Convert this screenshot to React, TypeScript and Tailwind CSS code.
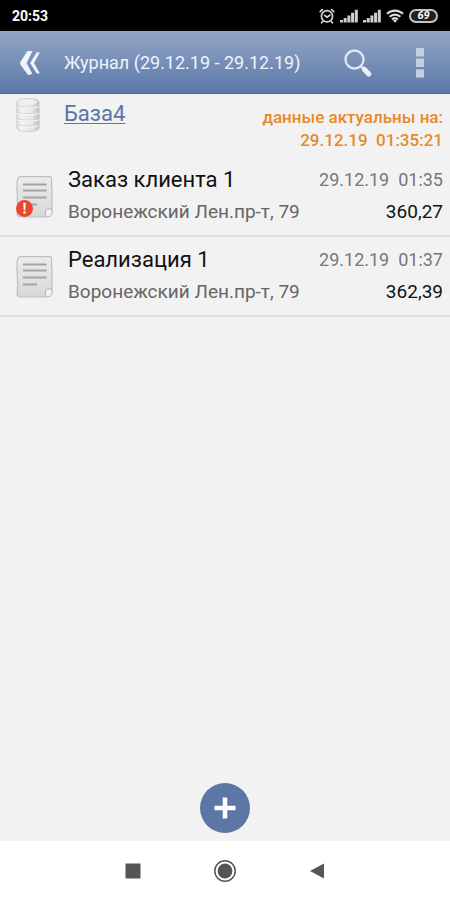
interface JournalEntry {
    id: number;
    title: string;
    client: string;
    date: string;
    total: string;
    hasError?: boolean;
}

const entries: JournalEntry[] = [
    { id: 1, title: "Заказ клиента 1", client: "Воронежский Лен.пр-т, 79", date: "29.12.19  01:35", total: "360,27", hasError: true },
    { id: 2, title: "Реализация 1", client: "Воронежский Лен.пр-т, 79", date: "29.12.19  01:37", total: "362,39" },
];

function AlarmIcon() {
    return (
        <svg viewBox="0 0 16 16" className="h-4 w-4" fill="none" stroke="#d4d4d4" strokeWidth="1.7" strokeLinecap="round">
            <circle cx="8" cy="8.3" r="5.6" />
            <path d="M1.2 3.6 3.4 1.6M14.8 3.6 12.6 1.6M3.6 13.6 2.6 14.8M12.4 13.6l1 1.2" />
            <path d="M5.6 7.4 8 9.2l2.8-2" />
        </svg>
    );
}

function SignalIcon() {
    return (
        <svg viewBox="0 0 18 14" className="h-3.5 w-[18px]" fill="#d0d0d0">
            <rect x="0" y="11" width="3" height="2.5" />
            <rect x="3.7" y="9" width="3" height="4.5" />
            <rect x="7.4" y="6.5" width="3" height="7" />
            <rect x="11.1" y="3.7" width="3" height="9.8" />
            <rect x="14.8" y="0.8" width="3" height="12.7" />
        </svg>
    );
}

function WifiIcon() {
    return (
        <svg viewBox="0 0 18 14" className="h-3.5 w-[18px]" fill="none" stroke="#dcdcdc" strokeWidth="2.2">
            <path d="M1 4.8a11.5 11.5 0 0 1 16 0" />
            <path d="M3.6 7.8a7.7 7.7 0 0 1 10.8 0" />
            <path d="M6 10.4a4.2 4.2 0 0 1 6 0" />
            <path d="M7 11.6 9 13.8l2-2.2a2.8 2.8 0 0 0-4 0Z" fill="#dcdcdc" stroke="none" />
        </svg>
    );
}

function BackIcon() {
    return (
        <svg viewBox="0 0 20 26" className="h-[26px] w-5" fill="#eef3fc">
            <path d="M8.2 1h4.3L6.6 13l5.9 11h-.9l-2.4 1c-.9 0-1.4-.4-1.9-1.1L.4 14.4c-.5-.8-.5-1.6 0-2.4L6.7 2c.4-.6.8-1 1.5-1Z" />
            <path d="M16.8 2.6h2.6L13.8 13l5.6 10.2h-2.6L10.4 13Z" stroke="#eef3fc" strokeWidth="0.5" />
        </svg>
    );
}

function SearchIcon() {
    return (
        <svg viewBox="0 0 28 28" className="h-7 w-7" fill="none">
            <circle cx="10.5" cy="10.5" r="9" stroke="#dfe8f8" strokeWidth="2.3" />
            <path d="m17 17.2 3 3" stroke="#dfe8f8" strokeWidth="2.4" />
            <path d="m20.4 20.4 4.4 4.6" stroke="#eaf1fd" strokeWidth="5" strokeLinecap="round" />
        </svg>
    );
}

function MenuIcon() {
    return (
        <svg viewBox="0 0 8 30" className="h-[30px] w-2" fill="#c3cfe3">
            <rect width="8" height="8.4" rx="0.5" />
            <rect y="10.6" width="8" height="8.4" rx="0.5" />
            <rect y="21.2" width="8" height="8.4" rx="0.5" />
        </svg>
    );
}

function DatabaseIcon() {
    return (
        <svg viewBox="0 0 24 34" className="h-[34px] w-6">
            <defs>
                <linearGradient id="cylinder">
                    <stop offset="0" stopColor="#d8d8d8" />
                    <stop offset="0.2" stopColor="#f3f3f3" />
                    <stop offset="0.7" stopColor="#e4e4e4" />
                    <stop offset="1" stopColor="#bdbdbd" />
                </linearGradient>
            </defs>
            <path
                d="M.8 4C1.5 1.5 5 .6 12 .6S22.500 1.500 23.200 4v26c-.5 2.500-4.200 3.500-11.200 3.500S1.300 32.500.8 30Z"
                fill="url(#cylinder)"
                stroke="#cacaca"
                strokeWidth="0.8"
            />
            <ellipse cx="11.5" cy="4" rx="9.5" ry="2.4" fill="#efefef" />
            <path
                d="M1.3 8c3 1.4 18.4 1.4 21.4 0M1.3 14.5c3 1.4 18.4 1.4 21.4 0M1.3 21c3 1.4 18.4 1.4 21.4 0M1.3 27c3 1.4 18.4 1.4 21.4 0"
                fill="none"
                stroke="#d2d2d2"
            />
            <path
                d="M1.3 9c3 1.4 18.4 1.4 21.4 0M1.3 15.5c3 1.4 18.4 1.4 21.4 0M1.3 22c3 1.4 18.4 1.4 21.4 0M1.3 28c3 1.4 18.4 1.4 21.4 0"
                fill="none"
                stroke="#fafafa"
            />
        </svg>
    );
}

function DocumentIcon({ hasError }: { hasError?: boolean }) {
    return (
        <svg viewBox="0 0 38 42" className="mt-0.5 h-[42px] w-[38px]">
            <defs>
                <linearGradient id="paper" x2="0" y2="1">
                    <stop offset="0" stopColor="#ececec" />
                    <stop offset="1" stopColor="#d8d8d8" />
                </linearGradient>
            </defs>
            <path
                d="M5 .7h28c2.2 0 3 1 2.8 3L35.4 8l.6 6v20l-7 7H5c-2.5 0-4-1.2-4-3.5L1.6 31 1 8l.5-4C1.6 1.8 2.8.7 5 .7Z"
                fill="url(#paper)"
                stroke="#bebebe"
                strokeWidth="1.2"
            />
            <path d="M29 41c1.2-2 .2-5 .5-6.3s2.800-1.700 6.500-2V37c0 2.500-2 4-7 4Z" fill="#f0f0f0" stroke="#b2b2b2" />
            <path d="M7 8.5h23.5M7 14.5h23.5M7 21.5h23.5M7 28.5h14" stroke="#a4a4a4" strokeWidth="2" />
            {hasError && (
                <>
                    <circle cx="8.5" cy="32.5" r="8.5" fill="#e9482b" />
                    <path d="M7.2 26.8h2.6l-.5 7.4H7.7Z" fill="#fff" />
                    <circle cx="8.5" cy="36.5" r="1.3" fill="#fff" />
                </>
            )}
        </svg>
    );
}

function StatusBar() {
    return (
        <div className="flex h-[31px] items-center justify-between bg-black px-3 text-white">
            <span className="text-sm font-bold">20:53</span>
            <div className="flex items-center gap-[5px]">
                <AlarmIcon />
                <SignalIcon />
                <SignalIcon />
                <WifiIcon />
                <span className="flex h-3.5 w-[29px] items-center justify-center rounded-full border-2 border-[#c4c4c4] bg-[#202020] text-[11px] leading-none font-bold italic">
                    69
                </span>
            </div>
        </div>
    );
}

function EntryRow({ entry }: { entry: JournalEntry }) {
    return (
        <li className="flex h-20 items-center gap-3.5 border-b-2 border-[#e2e2e2] pr-[7px] pl-4">
            <DocumentIcon hasError={entry.hasError} />
            <div className="min-w-0 flex-1">
                <div className="flex items-center justify-between">
                    <h2 className="text-[22px] leading-8 text-[#111111]">{entry.title}</h2>
                    <time className="text-lg leading-8 whitespace-pre text-[#777777]">{entry.date}</time>
                </div>
                <div className="flex items-center justify-between">
                    <span className="text-[19px] leading-8 text-[#666666]">{entry.client}</span>
                    <span className="text-[19px] leading-8 text-[#111111]">{entry.total}</span>
                </div>
            </div>
        </li>
    );
}

export default function App() {
    return (
        <div className="flex min-h-screen flex-col bg-[#f2f2f2] font-['Roboto',sans-serif]">
            <StatusBar />
            <header className="flex h-[63px] items-center border-b border-[#49699d] bg-linear-to-b from-[#92a5c6] to-[#5c79a8] pt-0.5 pr-[26px] pl-5 text-[#eef3fc]">
                <button type="button" aria-label="Назад" className="mr-6">
                    <BackIcon />
                </button>
                <h1 className="flex-1 text-lg">Журнал (29.12.19 - 29.12.19)</h1>
                <button type="button" aria-label="Поиск" className="mr-11">
                    <SearchIcon />
                </button>
                <button type="button" aria-label="Меню">
                    <MenuIcon />
                </button>
            </header>

            <main className="flex flex-1 flex-col">
                <div className="flex h-[63px] items-start pr-[7px] pl-4">
                    <div className="mt-1 mr-6">
                        <DatabaseIcon />
                    </div>
                    <a href="#base" className="mt-1 text-[22px] leading-8 text-[#5b74a6] underline decoration-1 underline-offset-2">
                        База4
                    </a>
                    <p className="ml-auto pt-3 text-right text-[17px] leading-[23px] font-medium whitespace-pre text-[#e58a2c]">
                        данные актуальны на:{"\n"}29.12.19  01:35:21
                    </p>
                </div>
                <ul>
                    {entries.map((entry) => (
                        <EntryRow key={entry.id} entry={entry} />
                    ))}
                </ul>
                <button
                    type="button"
                    aria-label="Добавить"
                    className="mx-auto mt-auto mb-2 flex h-[50px] w-[50px] items-center justify-center rounded-full bg-[#5c76a5]"
                >
                    <svg viewBox="0 0 22 22" className="h-[22px] w-[22px]" stroke="#fff" strokeWidth="4.5">
                        <path d="M11 .5v21M.5 11h21" />
                    </svg>
                </button>
            </main>

            <nav className="flex h-[59px] items-center justify-center gap-[66px] bg-white text-[#555555]">
                <button type="button" aria-label="Недавние" className="flex w-[26px] justify-center">
                    <svg viewBox="0 0 16 16" className="h-4 w-4" fill="currentColor">
                        <rect x="0.5" y="0.5" width="15" height="15" />
                    </svg>
                </button>
                <button type="button" aria-label="Домой" className="flex w-[26px] justify-center">
                    <svg viewBox="0 0 24 24" className="h-6 w-6">
                        <circle cx="12" cy="12" r="10.2" fill="none" stroke="currentColor" strokeWidth="1.5" />
                        <circle cx="12" cy="12" r="7.4" fill="currentColor" />
                    </svg>
                </button>
                <button type="button" aria-label="Назад" className="flex w-[26px] justify-center">
                    <svg viewBox="0 0 16 16" className="h-4 w-4" fill="currentColor">
                        <path d="M1 8 15 .5v15Z" />
                    </svg>
                </button>
            </nav>
        </div>
    );
}
